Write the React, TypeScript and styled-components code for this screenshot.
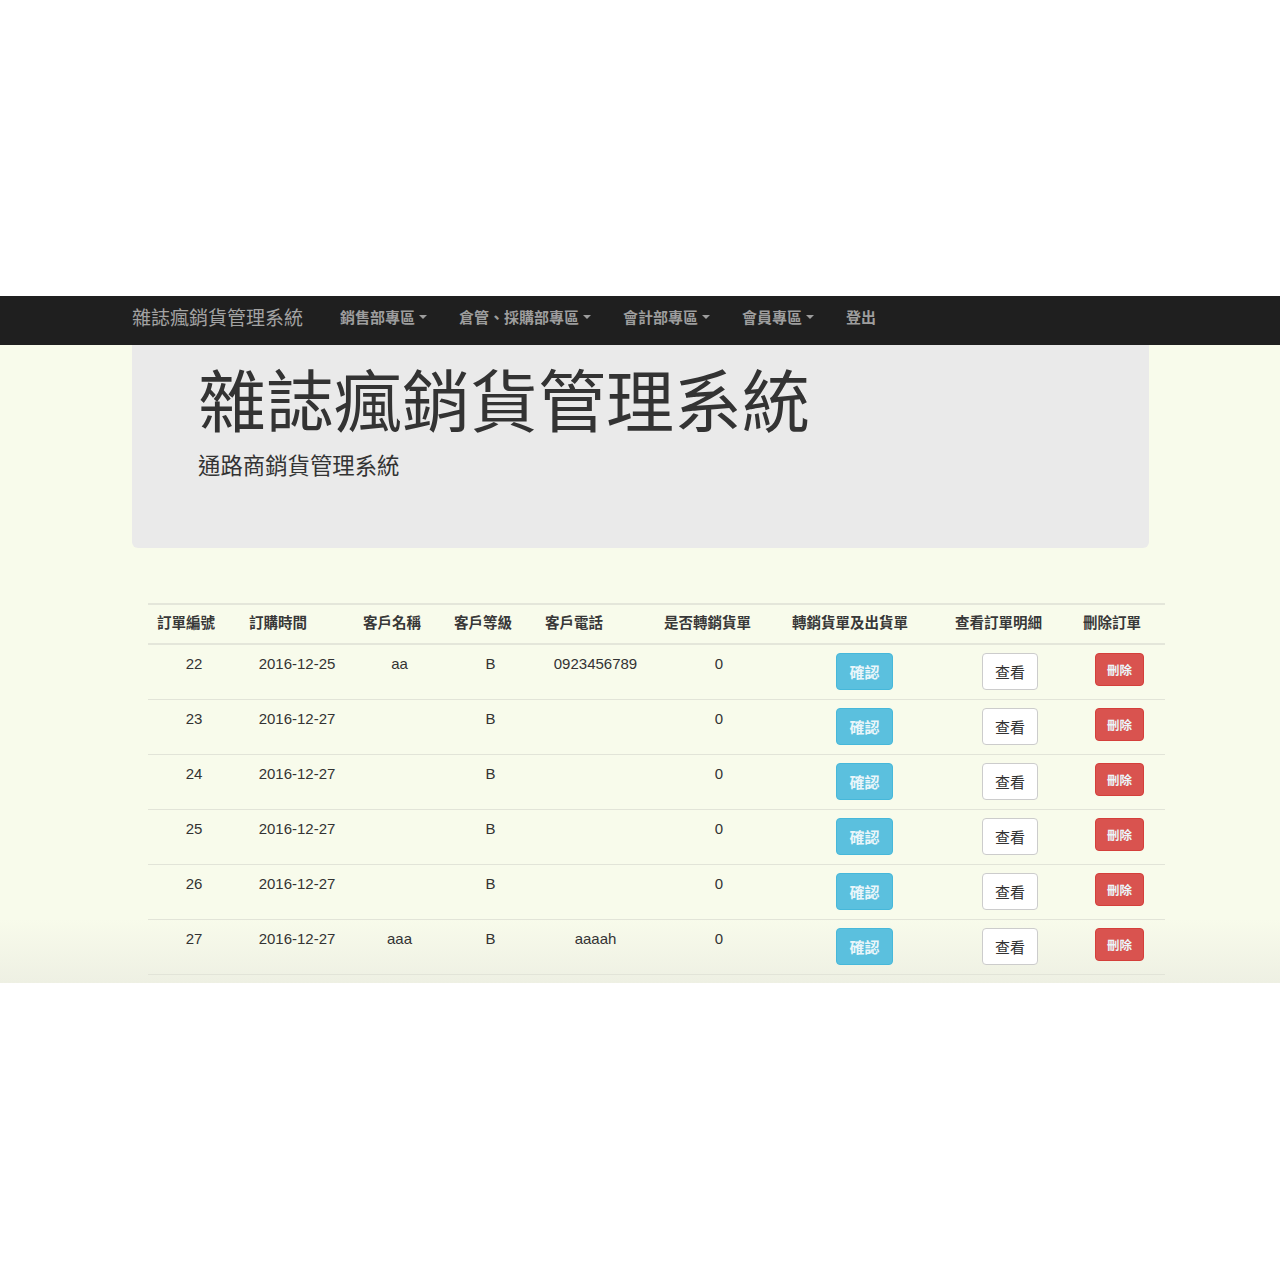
import React from "react";
import styled, { createGlobalStyle } from "styled-components";

const GlobalStyle = createGlobalStyle`
  html, body { margin: 0; padding: 0; background: #ffffff; }
  body {
    font-family: "Liberation Sans", "Noto Sans CJK TC", Arial, sans-serif;
    color: #333333;
  }
  * { box-sizing: border-box; }
`;

const Page = styled.div`
  width: 1280px;
  min-height: 1280px;
  background: #ffffff;
  display: flex;
  flex-direction: column;
`;

const TopBlank = styled.div`
  height: 296px;
  background: #ffffff;
`;

const Screen = styled.div`
  display: flex;
  flex-direction: column;
  background: #f8fbeb;
`;

const NavBar = styled.nav`
  height: 49px;
  background: #1f1f1f;
  display: flex;
  align-items: center;
  padding-left: 117px;
  padding-bottom: 8px;
`;

const Brand = styled.a`
  padding: 0 15px;
  font-size: 19px;
  color: #a3a3a3;
  font-family: "Noto Sans CJK TC", sans-serif;
  margin-right: 6px;
`;

const NavItem = styled.a`
  display: flex;
  align-items: center;
  padding: 0 16px;
  font-size: 15px;
  font-weight: 700;
  color: #9d9d9d;
  font-family: "Noto Sans CJK TC", sans-serif;
`;

const Caret = styled.span`
  display: inline-block;
  width: 0;
  height: 0;
  margin-left: 4px;
  border-top: 4px solid #9d9d9d;
  border-left: 4px solid transparent;
  border-right: 4px solid transparent;
`;

const Content = styled.main`
  height: 638px;
  padding-left: 132px;
  display: flex;
  flex-direction: column;
  background: linear-gradient(
    to bottom,
    #f8fbeb 0%,
    #f8fbeb 90%,
    #eef0e3 100%
  );
`;

const Jumbotron = styled.section`
  width: 1017px;
  height: 203px;
  background: #eaeaea;
  border-radius: 0 0 6px 6px;
  padding: 3px 66px 0;
`;

const Title = styled.h1`
  margin: 0;
  font-family: "Noto Sans CJK TC", sans-serif;
  font-weight: 400;
  font-size: 68px;
  line-height: 99px;
  color: #333333;
`;

const Subtitle = styled.p`
  margin: 1px 0 0;
  font-family: "Noto Sans CJK TC", sans-serif;
  font-size: 22.4px;
  line-height: 33px;
  color: #333333;
`;

const TableWrap = styled.div`
  margin-top: 55px;
  margin-left: 16px;
  width: 1017px;
`;

const Table = styled.table`
  width: 1017px;
  table-layout: fixed;
  border-collapse: collapse;
  font-size: 15px;
`;

const Col = styled.col<{ $w: number }>`
  width: ${(p) => p.$w}px;
`;

const Th = styled.th`
  text-align: left;
  font-family: "Noto Sans CJK TC", sans-serif;
  font-weight: 700;
  font-size: 14.5px;
  color: #383838;
  padding: 4px 9px 10px;
  height: 40px;
  vertical-align: middle;
  border-top: 2px solid #e4e6da;
  border-bottom: 2px solid #e4e6da;
  white-space: nowrap;
`;

const Td = styled.td`
  text-align: center;
  vertical-align: top;
  padding: 8px 8px 9px;
  line-height: 21px;
  color: #333333;
  border-bottom: 1px solid #e2e4d8;
  font-family: "Liberation Sans", "Noto Sans CJK TC", sans-serif;
`;

const Btn = styled.button<{ $kind: "info" | "default" | "danger" }>`
  font-family: "Noto Sans CJK TC", sans-serif;
  cursor: pointer;
  border-radius: 4px;
  border: 1px solid
    ${(p) =>
      p.$kind === "info" ? "#46b8da" : p.$kind === "danger" ? "#d43f3a" : "#cccccc"};
  background: ${(p) =>
    p.$kind === "info" ? "#5bc0de" : p.$kind === "danger" ? "#d9534f" : "#ffffff"};
  color: ${(p) => (p.$kind === "default" ? "#333333" : "#eaf6fa")};
  font-size: ${(p) => (p.$kind === "danger" ? "12.5px" : "15px")};
  font-weight: ${(p) => (p.$kind === "default" ? 400 : 700)};
  line-height: ${(p) => (p.$kind === "danger" ? "19px" : "21px")};
  padding: ${(p) => (p.$kind === "danger" ? "6px 11px" : "7px 12px")};
`;

const rows = [
  { id: 22, date: "2016-12-25", name: "aa", level: "B", phone: "0923456789", flag: 0 },
  { id: 23, date: "2016-12-27", name: "", level: "B", phone: "", flag: 0 },
  { id: 24, date: "2016-12-27", name: "", level: "B", phone: "", flag: 0 },
  { id: 25, date: "2016-12-27", name: "", level: "B", phone: "", flag: 0 },
  { id: 26, date: "2016-12-27", name: "", level: "B", phone: "", flag: 0 },
  { id: 27, date: "2016-12-27", name: "aaa", level: "B", phone: "aaaah", flag: 0 },
];

const widths = [92, 114, 91, 91, 119, 128, 163, 128, 91];
const headers = [
  "訂單編號",
  "訂購時間",
  "客戶名稱",
  "客戶等級",
  "客戶電話",
  "是否轉銷貨單",
  "轉銷貨單及出貨單",
  "查看訂單明細",
  "刪除訂單",
];

export default function App() {
  return (
    <>
      <GlobalStyle />
      <Page>
        <TopBlank />
        <Screen>
          <NavBar>
            <Brand>雜誌瘋銷貨管理系統</Brand>
            <NavItem>
              銷售部專區<Caret />
            </NavItem>
            <NavItem>
              倉管、採購部專區<Caret />
            </NavItem>
            <NavItem>
              會計部專區<Caret />
            </NavItem>
            <NavItem>
              會員專區<Caret />
            </NavItem>
            <NavItem>登出</NavItem>
          </NavBar>
          <Content>
            <Jumbotron>
              <Title>雜誌瘋銷貨管理系統</Title>
              <Subtitle>通路商銷貨管理系統</Subtitle>
            </Jumbotron>
            <TableWrap>
              <Table>
                <colgroup>
                  {widths.map((w, i) => (
                    <Col key={i} $w={w} />
                  ))}
                </colgroup>
                <thead>
                  <tr>
                    {headers.map((h) => (
                      <Th key={h}>{h}</Th>
                    ))}
                  </tr>
                </thead>
                <tbody>
                  {rows.map((r) => (
                    <tr key={r.id}>
                      <Td>{r.id}</Td>
                      <Td>{r.date}</Td>
                      <Td>{r.name}</Td>
                      <Td>{r.level}</Td>
                      <Td>{r.phone}</Td>
                      <Td>{r.flag}</Td>
                      <Td>
                        <Btn $kind="info">確認</Btn>
                      </Td>
                      <Td>
                        <Btn $kind="default">查看</Btn>
                      </Td>
                      <Td>
                        <Btn $kind="danger">刪除</Btn>
                      </Td>
                    </tr>
                  ))}
                </tbody>
              </Table>
            </TableWrap>
          </Content>
        </Screen>
      </Page>
    </>
  );
}
